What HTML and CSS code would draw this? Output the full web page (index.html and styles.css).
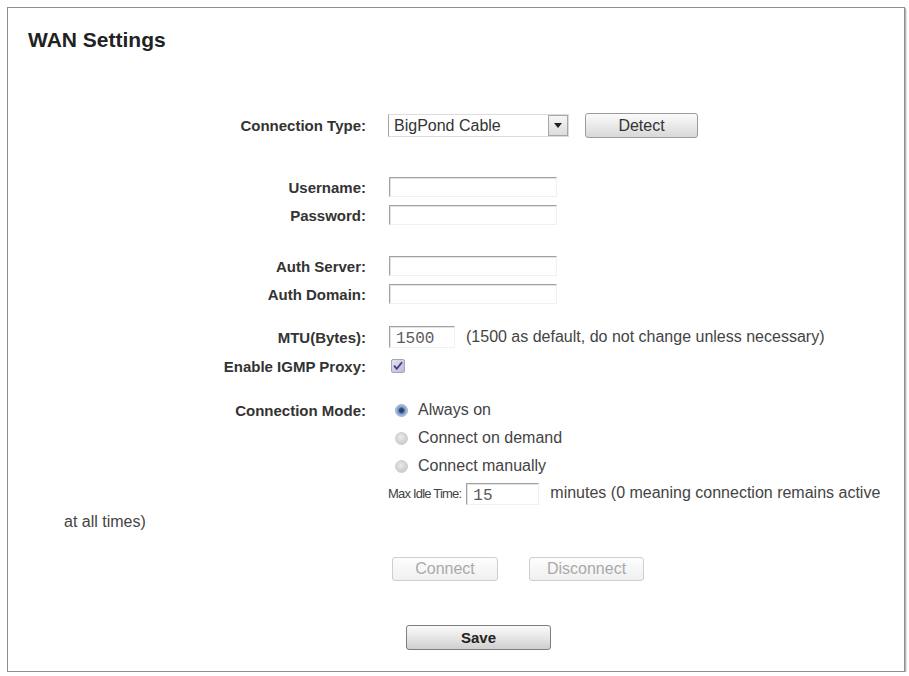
FILE: index.html
```html
<!DOCTYPE html>
<html>
<head>
<meta charset="utf-8">
<link rel="stylesheet" href="styles.css">
</head>
<body>
<div class="frame">
  <h1 class="title">WAN Settings</h1>

  <div class="row r-type">
    <div class="lbl">Connection Type:</div>
    <div class="select">
      <span class="select-text">BigPond Cable</span>
      <span class="select-arrow"><svg width="8" height="5" viewBox="0 0 8 5"><path d="M0 0H8L4 5Z" fill="#222"/></svg></span>
    </div>
    <button class="btn btn-detect">Detect</button>
  </div>

  <div class="row r-user">
    <div class="lbl">Username:</div>
    <div class="txt"></div>
  </div>
  <div class="row r-near">
    <div class="lbl">Password:</div>
    <div class="txt"></div>
  </div>

  <div class="row r-auth">
    <div class="lbl">Auth Server:</div>
    <div class="txt"></div>
  </div>
  <div class="row r-near">
    <div class="lbl">Auth Domain:</div>
    <div class="txt"></div>
  </div>

  <div class="row r-mtu">
    <div class="lbl">MTU(Bytes):</div>
    <div class="txt txt-mtu"><span class="mono">1500</span></div>
    <span class="note">(1500 as default, do not change unless necessary)</span>
  </div>
  <div class="row r-igmp">
    <div class="lbl">Enable IGMP Proxy:</div>
    <svg class="check" width="14" height="14" viewBox="0 0 14 14">
      <defs>
        <linearGradient id="cb" x1="0" y1="0" x2="1" y2="1">
          <stop offset="0" stop-color="#e4e4f0"/>
          <stop offset="1" stop-color="#b9b9d6"/>
        </linearGradient>
      </defs>
      <rect x="0.5" y="0.5" width="13" height="13" rx="1.5" fill="url(#cb)" stroke="#a4a4c0"/>
      <path d="M3.5 7.2 L5.8 9.8 L10.6 3.8" fill="none" stroke="#3d3d86" stroke-width="1.8" stroke-linecap="round" stroke-linejoin="round"/>
    </svg>
  </div>

  <div class="row r-mode">
    <div class="lbl">Connection Mode:</div>
    <svg class="radio" width="13" height="13" viewBox="0 0 13 13">
      <defs>
        <radialGradient id="rs" cx="0.5" cy="0.5" r="0.5">
          <stop offset="0" stop-color="#1f3a66"/>
          <stop offset="0.35" stop-color="#2c4e80"/>
          <stop offset="0.6" stop-color="#7d9cc4"/>
          <stop offset="1" stop-color="#b8c8de"/>
        </radialGradient>
      </defs>
      <circle cx="6.5" cy="6.5" r="6" fill="url(#rs)" stroke="#9fb2cc"/>
    </svg>
    <span class="opt">Always on</span>
  </div>
  <div class="row r-near r-opt">
    <div class="lbl"></div>
    <svg class="radio" width="13" height="13" viewBox="0 0 13 13">
      <defs>
        <radialGradient id="ru" cx="0.45" cy="0.4" r="0.6">
          <stop offset="0" stop-color="#eaeaea"/>
          <stop offset="1" stop-color="#c9c9c9"/>
        </radialGradient>
      </defs>
      <circle cx="6.5" cy="6.5" r="6" fill="url(#ru)" stroke="#cfcfcf"/>
    </svg>
    <span class="opt">Connect on demand</span>
  </div>
  <div class="row r-near r-opt">
    <div class="lbl"></div>
    <svg class="radio" width="13" height="13" viewBox="0 0 13 13">
      <circle cx="6.5" cy="6.5" r="6" fill="url(#ru)" stroke="#cfcfcf"/>
    </svg>
    <span class="opt">Connect manually</span>
  </div>

  <p class="idle"><span class="idle-lbl">Max Idle Time:</span><span class="txt txt-idle"><span class="mono">15</span></span><span class="idle-text">minutes (0 meaning connection remains active</span><br><span class="idle-text">at all times)</span></p>

  <div class="row r-conn">
    <div class="lbl"></div>
    <button class="btn btn-off btn-connect">Connect</button>
    <button class="btn btn-off btn-disconnect">Disconnect</button>
  </div>

  <div class="row r-save">
    <div class="lbl"></div>
    <button class="btn btn-save">Save</button>
  </div>
</div>
</body>
</html>
```

FILE: styles.css
```css
html, body {
  margin: 0;
  padding: 0;
  background: #ffffff;
}

body {
  font-family: "Liberation Sans", Arial, sans-serif;
  font-size: 16px;
  color: #444444;
}

.frame {
  box-sizing: border-box;
  width: 898px;
  height: 665px;
  margin: 7px 0 0 7px;
  border: 1px solid #8e8e8e;
  box-shadow: 1px 1px 0 #b8b8b8, 2px 2px 0 #e2e2e2;
  background: #ffffff;
}

.title {
  margin: 0;
  padding: 20px 0 0 20px;
  font-size: 21px;
  line-height: 24px;
  font-weight: bold;
  color: #222222;
}

.row {
  display: flex;
  align-items: center;
  height: 20px;
}

.lbl {
  flex: none;
  width: 358px;
  margin-right: 22px;
  text-align: right;
  font-size: 15px;
  font-weight: bold;
  color: #333333;
  white-space: nowrap;
}

.r-type { height: 25px; margin-top: 61px; }
.r-user { margin-top: 39px; }
.r-near { margin-top: 8px; }
.r-auth { margin-top: 31px; }
.r-mtu { margin-top: 23px; }
.r-igmp { margin-top: 9px; }
.r-mode { margin-top: 24px; }
.r-conn { height: 24px; margin-top: 21px; }
.r-save { height: 25px; margin-top: 44px; }

.select {
  box-sizing: border-box;
  display: flex;
  align-items: center;
  width: 181px;
  height: 23px;
  border: 1px solid #dcdcdc;
  border-left-color: #a8a8a8;
  padding-left: 5px;
}

.select-text {
  flex: 1;
  color: #333333;
}

.select-arrow {
  box-sizing: border-box;
  display: flex;
  align-items: center;
  justify-content: center;
  width: 20px;
  height: 21px;
  border: 1px solid #a7a7a7;
  background: linear-gradient(#f6f6f6, #dcdcdc);
}

.btn {
  box-sizing: border-box;
  font-family: "Liberation Sans", Arial, sans-serif;
  font-size: 16px;
  color: #333333;
  padding: 0;
  border: 1px solid #9c9c9c;
  border-radius: 3px;
  background: linear-gradient(#fbfbfb, #e6e6e6 60%, #d8d8d8);
}

.btn-detect {
  width: 113px;
  height: 25px;
  margin-left: 16px;
}

.btn-off {
  height: 24px;
  color: #a9a9a9;
  border-color: #cfcfcf;
  background: linear-gradient(#fdfdfd, #f0f0f0);
}

.btn-connect {
  width: 106px;
  margin-left: 4px;
}

.btn-disconnect {
  width: 115px;
  margin-left: 31px;
}

.btn-save {
  width: 145px;
  height: 25px;
  margin-left: 18px;
  border-color: #7e7e7e;
  color: #222222;
  font-weight: bold;
  font-size: 15px;
  background: linear-gradient(#fafafa, #e4e4e4 55%, #cfcfcf);
}

.txt {
  box-sizing: border-box;
  display: inline-block;
  width: 168px;
  height: 20px;
  margin-left: 1px;
  border-top: 1px solid #a2a2a2;
  border-left: 1px solid #a2a2a2;
  border-right: 1px solid #f0f0f0;
  border-bottom: 1px solid #f0f0f0;
  box-shadow: inset 1px 1px 0 #e3e3e3;
}

.txt-mtu {
  width: 66px;
  height: 22px;
  padding: 2px 0 0 6px;
}

.mono {
  font-family: "Liberation Mono", "Courier New", monospace;
  font-size: 16px;
  line-height: 17px;
  color: #5a5a5a;
}

.note {
  margin-left: 11px;
}

.check {
  margin-left: 3px;
}

.radio {
  margin-left: 7px;
}

.opt {
  margin-left: 10px;
}

.idle {
  box-sizing: border-box;
  width: 885px;
  margin: 3px 0 0 0;
  padding-left: 56px;
  text-indent: 324px;
  line-height: 28px;
}

.idle-lbl {
  font-size: 13px;
  letter-spacing: -0.8px;
}

.txt-idle {
  width: 73px;
  height: 22px;
  margin-left: 5px;
  margin-right: 11px;
  vertical-align: middle;
  text-indent: 0;
  line-height: 17px;
  padding: 2px 0 0 6px;
}
```
